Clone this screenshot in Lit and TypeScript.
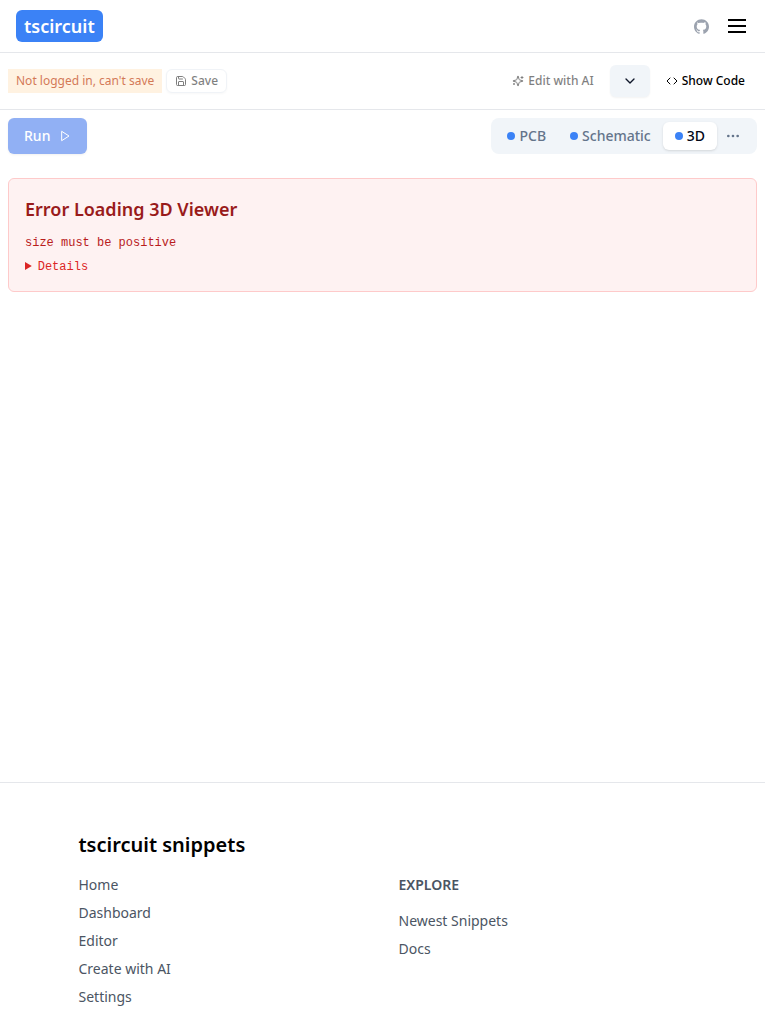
import { LitElement, html, css, svg } from "lit";
import { customElement } from "lit/decorators.js";

const icon = (cls: string, body: unknown) => html`<svg class="icon ${cls}" viewBox="0 0 24 24" aria-hidden="true">${body}</svg>`;

const save = svg`<path d="M15.2 3a2 2 0 0 1 1.4.6l3.8 3.8a2 2 0 0 1 .6 1.4V19a2 2 0 0 1-2 2H5a2 2 0 0 1-2-2V5a2 2 0 0 1 2-2z"/><path d="M17 21v-7a1 1 0 0 0-1-1H8a1 1 0 0 0-1 1v7"/><path d="M7 3v4a1 1 0 0 0 1 1h7"/>`;
const sparkles = svg`<path d="M9.937 15.5A2 2 0 0 0 8.5 14.063l-6.135-1.582a.5.5 0 0 1 0-.962L8.5 9.936A2 2 0 0 0 9.937 8.5l1.582-6.135a.5.5 0 0 1 .963 0L14.063 8.5A2 2 0 0 0 15.5 9.937l6.135 1.581a.5.5 0 0 1 0 .964L15.5 14.063a2 2 0 0 0-1.437 1.437l-1.582 6.135a.5.5 0 0 1-.963 0z"/><path d="M20 3v4"/><path d="M22 5h-4"/><path d="M4 17v2"/><path d="M5 18H3"/>`;
const chevron = svg`<path d="m6 9 6 6 6-6"/>`;
const code = svg`<path d="m16 18 6-6-6-6"/><path d="m8 6-6 6 6 6"/>`;
const play = svg`<path d="M6 3 20 12 6 21Z"/>`;
const dots = svg`<circle cx="12" cy="12" r="1"/><circle cx="19" cy="12" r="1"/><circle cx="5" cy="12" r="1"/>`;
const menu = svg`<path d="M3 12h18"/><path d="M3 6h18"/><path d="M3 18h18"/>`;
const github = svg`<path d="M12 .297c-6.63 0-12 5.373-12 12 0 5.303 3.438 9.8 8.205 11.385.6.113.82-.258.82-.577 0-.285-.01-1.04-.015-2.04-3.338.724-4.042-1.61-4.042-1.61C4.422 18.07 3.633 17.7 3.633 17.7c-1.087-.744.084-.729.084-.729 1.205.084 1.838 1.236 1.838 1.236 1.07 1.835 2.809 1.305 3.495.998.108-.776.417-1.305.76-1.605-2.665-.3-5.466-1.332-5.466-5.93 0-1.31.465-2.38 1.235-3.22-.135-.303-.54-1.523.105-3.176 0 0 1.005-.322 3.3 1.23.96-.267 1.98-.399 3-.405 1.02.006 2.04.138 3 .405 2.28-1.552 3.285-1.23 3.285-1.23.645 1.653.24 2.873.12 3.176.765.84 1.23 1.91 1.23 3.22 0 4.61-2.805 5.625-5.475 5.92.42.36.81 1.096.81 2.22 0 1.606-.015 2.896-.015 3.286 0 .315.21.69.825.57C20.565 22.092 24 17.592 24 12.297c0-6.627-5.373-12-12-12"/>`;

@customElement("app-root")
export class AppRoot extends LitElement {
  static styles = css`
    :host { display: flex; flex-direction: column; height: 1024px; overflow: hidden; background: #fff; color: #000; font-family: "Noto Sans", sans-serif; font-size: 14px; line-height: 20px; }
    * { box-sizing: border-box; }
    button { font: inherit; color: inherit; background: none; border: 0; margin: 0; padding: 0; display: flex; align-items: center; white-space: nowrap; }
    h1, h2, h3, p { margin: 0; }
    .icon { width: 12px; height: 12px; flex: none; fill: none; stroke: currentColor; stroke-width: 2; stroke-linecap: round; stroke-linejoin: round; }
    .header { flex: none; height: 53px; padding: 0 16px; display: flex; align-items: center; border-bottom: 1px solid #e5e7eb; }
    .logo { height: 32px; padding: 2px 8px; border-radius: 6px; background: #3b82f6; color: #fff; font-size: 18px; line-height: 28px; font-weight: 600; }
    .spacer { flex: 1; }
    .github { width: 15px; height: 15px; fill: #9ca3af; stroke: none; margin-right: 16px; }
    .menu { width: 24px; height: 24px; stroke-linecap: butt; }
    .toolbar { flex: none; height: 57px; padding: 0 8px; display: flex; align-items: center; border-bottom: 1px solid #e5e7eb; font-size: 12px; line-height: 16px; }
    .notice { height: 24px; padding: 4px 8px; background: #ffedd5; color: #c2410c; opacity: .7; }
    .faded { opacity: .5; }
    .save { height: 24px; margin-left: 4px; padding: 0 8px; gap: 4px; border: 1px solid #e2e8f0; border-radius: 6px; box-shadow: 0 1px 2px #0000000d; font-weight: 500; }
    .edit { gap: 4px; margin-right: 16px; font-weight: 500; }
    .more { width: 40px; height: 32px; justify-content: center; border-radius: 6px; background: #f1f5f9; color: #0f172a; box-shadow: 0 1px 2px #0000000d; }
    .more .icon { width: 16px; height: 16px; }
    .show { gap: 4px; margin: 0 12px 0 16px; font-weight: 500; }
    .controls { flex: none; display: flex; justify-content: space-between; padding: 8px 8px 0; font-weight: 500; }
    .run { height: 36px; padding: 0 16px; gap: 8.7px; border-radius: 6px; background: #2563eb; color: #fff; box-shadow: 0 1px 2px #0000001a; }
    .tabs { height: 36px; padding: 4px; display: flex; border-radius: 8px; background: #f1f5f9; color: #64748b; }
    .tab { height: 28px; padding: 0 12px; gap: 4px; border-radius: 6px; }
    .tab.active { background: #fff; color: #020817; box-shadow: 0 1px 3px #0000001a, 0 1px 2px -1px #0000001a; }
    .dot { width: 8px; height: 8px; border-radius: 50%; background: #3b82f6; }
    .overflow { width: 32px; margin-right: 4px; justify-content: center; }
    .overflow .icon { width: 16px; height: 16px; }
    .error { flex: none; height: 114px; margin: 24px 8px 0; padding: 16px; border: 1px solid #fecaca; border-radius: 6px; background: #fef2f2; }
    .title { color: #991b1b; font-size: 18px; line-height: 28px; font-weight: 600; }
    .message, .details { font-family: "Liberation Mono", monospace; font-size: 12px; line-height: 16px; }
    .message { margin-top: 12px; color: #b91c1c; }
    .details { margin-top: 8px; color: #dc2626; }
    .footer { flex: none; margin-top: 490px; padding: 48px 0; border-top: 1px solid #e5e7eb; color: #4b5563; }
    .inner { width: 608px; margin: 0 auto; }
    .brand { color: #000; font-size: 20px; line-height: 28px; font-weight: 600; margin-bottom: 16px; }
    .columns { display: grid; grid-template-columns: 1fr 1fr; gap: 32px; align-items: start; }
    .links { display: flex; flex-direction: column; gap: 8px; }
    .explore { font-size: 14px; line-height: 20px; font-weight: 600; margin-bottom: 8px; }
  `;

  render() {
    return html`
      <header class="header">
        <h1 class="logo">tscircuit</h1><span class="spacer"></span>
        ${icon("github", github)}${icon("menu", menu)}
      </header>
      <div class="toolbar">
        <div class="notice">Not logged in, can't save</div>
        <button class="save faded">${icon("", save)}Save</button>
        <span class="spacer"></span>
        <button class="edit faded">${icon("", sparkles)}Edit with AI</button>
        <button class="more" aria-label="More">${icon("", chevron)}</button>
        <button class="show">${icon("", code)}Show Code</button>
      </div>
      <div class="controls">
        <button class="run faded">Run${icon("", play)}</button>
        <div class="tabs">
          ${["PCB", "Schematic", "3D"].map((t) => html`<button class="tab ${t === "3D" ? "active" : ""}"><span class="dot"></span>${t}</button>`)}
          <button class="overflow" aria-label="More views">${icon("", dots)}</button>
        </div>
      </div>
      <section class="error">
        <h2 class="title">Error Loading 3D Viewer</h2>
        <p class="message">size must be positive</p>
        <details class="details"><summary>Details</summary></details>
      </section>
      <footer class="footer">
        <div class="inner">
          <h2 class="brand">tscircuit snippets</h2>
          <div class="columns">
            <nav class="links">${["Home", "Dashboard", "Editor", "Create with AI", "Settings"].map((t) => html`<span>${t}</span>`)}</nav>
            <nav class="links"><h3 class="explore">EXPLORE</h3><span>Newest Snippets</span><span>Docs</span></nav>
          </div>
        </div>
      </footer>`;
  }
}
